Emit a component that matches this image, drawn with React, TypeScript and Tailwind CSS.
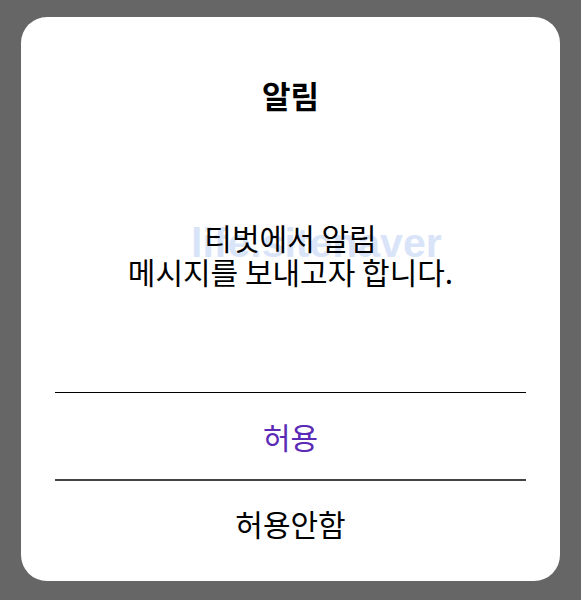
export default function App() {
  return (
    <div className="min-h-[600px] w-full bg-[#666666] px-[21px] pt-[17px] pb-[19px] font-['Noto_Sans_CJK_KR',sans-serif]">
      <div className="relative flex h-[564px] flex-col rounded-[26px] bg-white px-[34px]">
        <h1 className="mt-[60px] text-center text-[31px] font-bold leading-[36px] text-black">알림</h1>
        <div className="relative mt-[107px] text-center text-[30px] leading-[34px] text-black">
          {/* watermark from the original capture */}
          <span className="pointer-events-none absolute left-[136px] top-[3px] select-none font-['Liberation_Sans',sans-serif] text-[41px] font-bold leading-[40px] text-[#d9e4f9]">
            life.sitenaver
          </span>
          <p className="relative">티벗에서 알림</p>
          <p className="relative">메시지를 보내고자 합니다.</p>
        </div>
        <div className="mt-[104px] border-t border-black" />
        <button type="button" className="h-[86px] text-center text-[30px] text-[#5a2ab6]">
          허용
        </button>
        <div className="border-t-2 border-[#444444]" />
        <button type="button" className="h-[84px] text-center text-[30px] text-black">
          허용안함
        </button>
      </div>
    </div>
  )
}
